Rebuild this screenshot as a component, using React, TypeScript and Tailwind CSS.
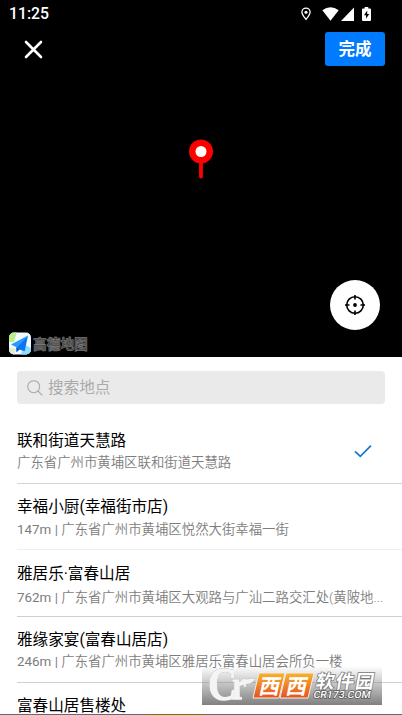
import React from 'react';

interface Place {
    name: string;
    distance?: string;
    address: string;
    selected?: boolean;
    rowClass: string;
    titleClass: string;
    gapClass: string;
}

const places: Place[] = [
    { name: '联和街道天慧路', address: '广东省广州市黄埔区联和街道天慧路', selected: true, rowClass: 'h-[67px] border-[#d5d5d5]', titleClass: 'pt-[14px]', gapClass: 'mt-[2px]' },
    { name: '幸福小厨(幸福街市店)', distance: '147m', address: '广东省广州市黄埔区悦然大街幸福一街', rowClass: 'h-[66px] border-[#f0f0f0]', titleClass: 'pt-[13px]', gapClass: 'mt-[3px]' },
    { name: '雅居乐·富春山居', distance: '762m', address: '广东省广州市黄埔区大观路与广汕二路交汇处(黄陂地...', rowClass: 'h-[67px] border-[#d0d0d0]', titleClass: 'pt-[14px]', gapClass: 'mt-[4px]' },
    { name: '雅缘家宴(富春山居店)', distance: '246m', address: '广东省广州市黄埔区雅居乐富春山居会所负一楼', rowClass: 'h-[66px] border-[#d0d0d0]', titleClass: 'pt-[13px]', gapClass: 'mt-[2px]' },
    { name: '富春山居售楼处', address: '', rowClass: 'h-[66px] border-transparent', titleClass: 'pt-[13px]', gapClass: '' },
];

const StatusBar = () => (
    <div className="flex h-7 items-center justify-between pl-[9px] pr-[31px]">
        <span className="text-[15.800px] font-medium leading-7">11:25</span>
        <div className="flex items-center text-white">
            <svg className="mr-[11px] h-[14px] w-[10px]" viewBox="0 0 11 14" fill="none" stroke="currentColor" strokeWidth="1.400">
                <path d="M5.5 13C3 9.7 1 7.4 1 5a4.5 4.5 0 0 1 9 0c0 2.4-2 4.7-4.5 8z" />
                <circle cx="5.5" cy="5" r="1.7" fill="currentColor" stroke="none" />
            </svg>
            <svg className="mr-[2px] h-[14px] w-[17px]" viewBox="0 0 17 14" fill="currentColor">
                <path d="M.3 3.200Q8.500-2.800 16.700 3.200L8.500 13.700z" />
            </svg>
            <svg className="mr-[8px] h-[14px] w-[13px]" viewBox="0 0 13 14" fill="currentColor">
                <path d="M13 .5V14H0z" />
            </svg>
            <svg className="h-[14px] w-[9px]" viewBox="0 0 9 14">
                <path d="M2.700 0h3.600v1.400H8q1 0 1 1V13q0 1-1 1H1q-1 0-1-1V2.400q0-1 1-1h1.700z" fill="white" />
                <path d="M5.200 3.600L2 8.300h2.100v3.500L7.200 7H5.200z" fill="black" />
            </svg>
        </div>
    </div>
);

const MapPin = () => (
    <svg className="h-10 w-[26px]" viewBox="0 0 26 40">
        <path d="M13 22v15.500" stroke="#ff0000" strokeWidth="3.800" strokeLinecap="round" />
        <circle cx="13" cy="12.500" r="12" fill="#ff0000" />
        <circle cx="13" cy="12.500" r="5.500" fill="white" />
    </svg>
);

const MapBrand = () => (
    <div className="flex items-center gap-[2px]">
        <svg className="h-[23px] w-[23px]" viewBox="0 0 23 23">
            <defs>
                <clipPath id="brand-tile"><rect x="1" y=".5" width="22" height="22" rx="5" /></clipPath>
            </defs>
            <g clipPath="url(#brand-tile)">
                <rect width="23" height="23" fill="#f4fbff" />
                <path d="M0 0h9L6 10H0z" fill="#b9ee8e" />
                <path d="M15 12l8 4v7H13z" fill="#8fdcff" />
                <path d="M0 15l9 2-3 6H0z" fill="#e2efd5" />
                <path d="M20 3.500L3 12.500l5.500 2.800z" fill="#249cff" />
                <path d="M20 3.500L8.500 15.300V20l3-2.600 5.200 1.900z" fill="#0876f2" />
                <path d="M8.500 15.300V20l3-2.600z" fill="#075bc8" />
            </g>
        </svg>
        <span className="text-[13.700px] font-bold leading-5 text-[#3c3c3c] [-webkit-text-stroke:0.700px_#777777]">高德地图</span>
    </div>
);

const PlaceRow = ({ place }: { place: Place }) => (
    <div className={`ml-[17px] flex shrink-0 border-b ${place.rowClass}`}>
        <div className={`min-w-0 flex-1 ${place.titleClass}`}>
            <div className="h-5 whitespace-nowrap text-[15.600px] leading-[21px] text-black">{place.name}</div>
            <div className={`h-[18px] whitespace-nowrap text-[13.400px] font-[350] leading-[19px] text-[#7d7d7d] ${place.gapClass}`}>
                {place.distance && <span className="font-normal">{place.distance} | </span>}
                {place.address}
            </div>
        </div>
        {place.selected && (
            <svg className="mr-[30px] mt-[27px] h-[14px] w-[18px]" viewBox="0 0 18 14" fill="none" stroke="#1878d0" strokeWidth="1.800">
                <path d="M1 7.300L6.300 12.300 17 1.600" />
            </svg>
        )}
    </div>
);

const Watermark = () => (
    <div className="absolute left-[202px] top-[666px] h-[39px] w-[180px] bg-gradient-to-b from-[#77777700] via-[#88888888] to-[#777777ee]">
        <svg className="h-[39px] w-[180px]" viewBox="0 0 180 39">
            <defs>
                <linearGradient id="mark-orange" x1="0" y1="0" x2="0" y2="1">
                    <stop offset="0" stopColor="#f8b32c" />
                    <stop offset="1" stopColor="#e9501e" />
                </linearGradient>
                <filter id="mark-edge" x="-10%" y="-10%" width="120%" height="120%">
                    <feDropShadow dx="0" dy="0" stdDeviation=".7" floodColor="#444444" />
                </filter>
            </defs>
            <g fill="#f4f4f4" stroke="#f4f4f4" strokeWidth="1.300" fontFamily="Liberation Serif, serif" fontWeight="700" filter="url(#mark-edge)">
                <text x="6" y="34" fontSize="46" textLength="29" lengthAdjust="spacingAndGlyphs">C</text>
                <text x="30" y="33" fontSize="39" textLength="14" lengthAdjust="spacingAndGlyphs">r</text>
                <path d="M37 20Q42 11 53 13 50 18 43 18z" strokeWidth=".5" />
            </g>
            <path d="M57 7h26l-6 25H51zM84 7h28l-6 25H78z" fill="url(#mark-orange)" stroke="#eeeeee" strokeWidth="1" />
            <g fontFamily="Noto Sans CJK SC, sans-serif" fontWeight="700">
                <text transform="translate(56 27.500) skewX(-12)" fontSize="21" fill="white" textLength="48">西西</text>
                <text transform="translate(113 21.500) skewX(-10)" fontSize="18.500" fill="white" stroke="#777777" strokeWidth="1.500" paintOrder="stroke" textLength="58">软件园</text>
            </g>
            <text transform="translate(111 32) skewX(-10)" fontFamily="Roboto, sans-serif" fontWeight="500" fontSize="10" fill="white" stroke="#555555" strokeWidth="1.500" paintOrder="stroke" textLength="57" lengthAdjust="spacingAndGlyphs">CR173.COM</text>
        </svg>
    </div>
);

export default function App() {
    return (
        <div className="relative flex h-[715px] w-[402px] flex-col overflow-hidden bg-white font-['Roboto','Noto_Sans_CJK_SC',sans-serif]">
            {/* Map area */}
            <div className="flex h-[357px] shrink-0 flex-col bg-black text-white">
                <StatusBar />
                <div className="flex h-[42px] items-center justify-between pl-[24px] pr-[17px]">
                    <svg className="h-[19px] w-[19px]" viewBox="0 0 19 19" stroke="white" strokeWidth="2.600" strokeLinecap="round">
                        <path d="M2 2l15 15M17 2L2 17" />
                    </svg>
                    <button className="h-[34px] w-[60px] rounded-[3px] bg-[#007aff] text-[16.500px] font-bold leading-[35px] text-white">完成</button>
                </div>
                <div className="mt-[69px] flex justify-center"><MapPin /></div>
                <div className="mt-auto flex items-end justify-between pb-[2px] pl-[8px] pr-[22px]">
                    <MapBrand />
                    <button className="mb-[25px] flex h-[50px] w-[50px] items-center justify-center rounded-full bg-white text-black">
                        <svg className="h-[22px] w-[22px]" viewBox="0 0 22 22" fill="none" stroke="currentColor" strokeWidth="1.600">
                            <circle cx="11" cy="11" r="8.300" />
                            <circle cx="11" cy="11" r="1.900" fill="currentColor" stroke="none" />
                            <path d="M11 1v4.500M11 16.500V21M1 11h4.500M16.500 11H21" />
                        </svg>
                    </button>
                </div>
            </div>

            {/* Search */}
            <div className="mx-[17px] mt-[14px] flex h-[33px] shrink-0 items-center rounded-[4px] bg-[#eaeaea] pl-[10px]">
                <svg className="mr-[5px] h-4 w-4" viewBox="0 0 16 16" fill="none" stroke="#a8a8a8" strokeWidth="1.100">
                    <circle cx="6.700" cy="6.700" r="6" />
                    <path d="M11 11l4.300 4.300" />
                </svg>
                <span className="pt-px text-[15.600px] leading-[33px] text-[#aaaaaa]">搜索地点</span>
            </div>

            {/* Nearby places */}
            <div className="mt-[13px] flex flex-col">
                {places.map(place => <PlaceRow key={place.name} place={place} />)}
            </div>

            <Watermark />
            <div className="absolute bottom-0 left-0 flex h-px w-full bg-[#686868]">
                <div className="ml-[147px] w-[57px] bg-[#777000]" />
            </div>
        </div>
    );
}
